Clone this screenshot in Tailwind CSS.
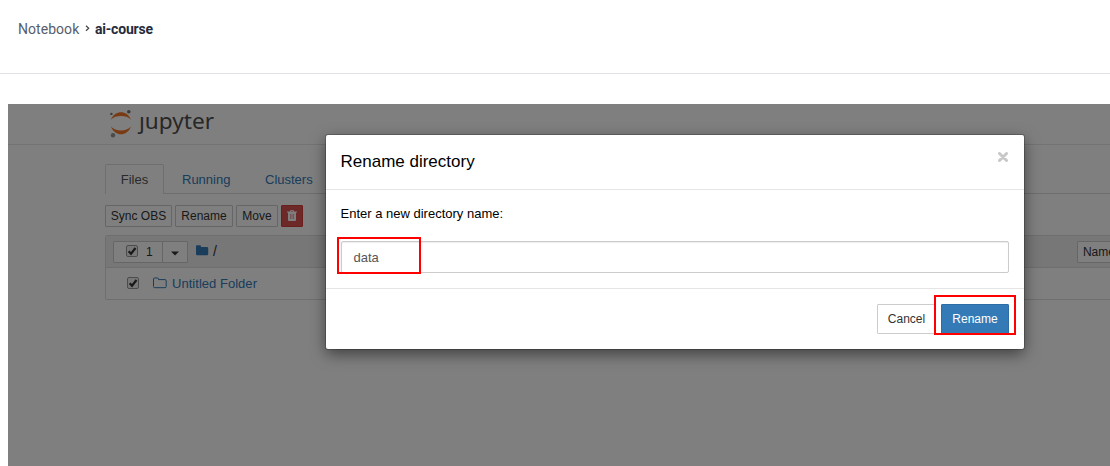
<!DOCTYPE html>
<html lang="en">
<head>
<meta charset="utf-8">
<title>ai-course</title>
<script src="https://cdn.jsdelivr.net/npm/@tailwindcss/browser@4"></script>
</head>
<body class="h-[466px] w-[1110px] overflow-hidden bg-white font-['Liberation_Sans',Arial,sans-serif] text-[13px] leading-5 text-black">
<header class="flex h-[74px] items-start border-b border-[#dfe1e6] pl-[18px] pt-[19px] font-['Roboto',sans-serif] text-[14px]">
  <span class="w-[67px] tracking-[0.05px] text-[#575d6c]">Notebook</span>
  <svg class="mt-[6px] h-[7px] w-[5px]" viewBox="0 0 5 7" fill="none" stroke="#444" stroke-width="1.2"><path d="M1 .8 3.7 3.3 1 5.8"/></svg>
  <span class="ml-[5px] font-bold tracking-[-0.2px] text-[#252b3a]">ai-course</span>
</header>
<main class="relative ml-2 mt-[30px] h-[362px] overflow-hidden bg-white">
  <div class="flex h-[41px] border-b border-[#e7e7e7] pl-[101px]">
    <svg class="mt-[5px] h-[29px] w-[23px] shrink-0" viewBox="0 0 23 29">
      <path d="M1.800 10.800C4 5.600 8 3.300 12 3.300s8 2.300 10 7.500C19.500 8 16 7 12 7S4.500 8 1.800 10.800ZM1.800 17.500c2.200 5.200 6.200 7.800 10.200 7.800s8-2.600 10-7.800c-2.500 2.800-6 4-10 4s-7.500-1.200-10.200-4Z" fill="#f37726"/>
      <circle cx="19.800" cy="2.700" r="1.800" fill="#767677"/><circle cx="2.400" cy="4.900" r="1.200" fill="#767677"/><circle cx="4" cy="26.300" r="2.200" fill="#989798"/>
    </svg>
    <div class="ml-[7px] mt-[2px] flex font-['Noto_Sans',sans-serif] text-[22.600px] leading-[30px] text-[#4e4e4e]"><span class="-ml-[3px] inline-block pl-[3px] [clip-path:inset(10px_0_0_0)]">j</span><span>upyter</span></div>
  </div>
  <div class="ml-[97px] mt-[19px] flex h-[30px] w-[1100px] border-b border-[#ddd] text-[13px] text-[#337ab7]">
    <div class="h-[30px] w-[59px] rounded-t-[2px] border border-b-0 border-[#ddd] bg-white pt-[5px] text-center text-[#555]">Files</div>
    <div class="ml-[18px] w-[49px] pt-[6px]">Running</div>
    <div class="ml-[34px] pt-[6px]">Clusters</div>
  </div>
  <div class="ml-[97px] mt-[11px] flex h-[22px] text-[12px] leading-5 text-[#333]">
    <div class="w-[67px] rounded-[1px] border border-[#ccc] text-center">Sync OBS</div>
    <div class="ml-[3px] w-[58px] rounded-[1px] border border-[#ccc] text-center">Rename</div>
    <div class="ml-[3px] w-[42px] rounded-[1px] border border-[#ccc] text-center">Move</div>
    <div class="ml-[3px] flex w-[22px] items-start justify-center rounded-[1px] border border-[#d43f3a] bg-[#d9534f] pt-[4px]">
      <svg class="h-[11px] w-[10px]" viewBox="0 0 10 11"><path fill="#fff" fill-rule="evenodd" d="M0 1.500h3L3.600 0h2.800L7 1.500h3v1H9V10a1 1 0 0 1-1 1H2a1 1 0 0 1-1-1V2.500H0ZM4 1.500h2L5.800.8H4.200ZM3 4v5h.5V4ZM4.750 4v5h.5V4ZM6.500 4v5h.5V4Z"/></svg>
    </div>
  </div>
  <div class="ml-[97px] mt-[8px] w-[1100px] rounded-[2px] border border-[#ddd]">
    <div class="flex h-[32px] border-b border-[#ddd] bg-[#eee]">
      <div class="ml-[7px] mt-[5px] flex h-[22px] w-[75px] rounded-[1px] border border-[#ccc] bg-white text-[12px] leading-5 text-[#333]">
        <div class="flex w-[49px] border-r border-[#ccc] pl-[12px]">
          <svg class="mt-[3px] h-[13px] w-[13px]" viewBox="0 0 13 13"><rect x=".5" y=".5" width="11" height="11" rx="1.500" fill="#eee" stroke="#999"/><path d="M2.700 6.200 5 8.700 9.500 3" fill="none" stroke="#333" stroke-width="2.200"/></svg>
          <span class="ml-[7px]">1</span>
        </div>
        <svg class="ml-[8px] mt-[9px] h-[5px] w-[8px]" viewBox="0 0 8 5"><path d="M0 .5h8L4 4.500Z" fill="#333"/></svg>
      </div>
      <svg class="ml-[8px] mt-[9px] h-[11px] w-[13px]" viewBox="0 0 13 11"><path d="M0 1.300Q0 .3 1 .3h3q1 0 1 1v.6h6q1.200 0 1.200 1.200v6q0 1.200-1.200 1.200H1.200Q0 10.300 0 9.100Z" fill="#337ab7"/></svg>
      <span class="ml-[4px] mt-[5px] text-[14px] text-[#333]">/</span>
      <div class="ml-[860px] mt-[5px] h-[22px] w-[80px] rounded-[1px] border border-[#ccc] bg-white pl-[5px] text-[12px] text-[#333]">Name</div>
    </div>
    <div class="flex h-[31px] pl-[20px] pt-[5px]">
      <svg class="mt-[4px] h-[13px] w-[14px]" viewBox="0 0 14 13"><rect x="1.500" y=".5" width="11" height="11" rx="1.500" fill="#eee" stroke="#999"/><path d="M3.700 6.200 6 8.700 10.500 3" fill="none" stroke="#333" stroke-width="2.200"/></svg>
      <svg class="ml-[13px] mt-[4px] h-[12px] w-[14px]" viewBox="0 0 14 12" fill="none" stroke="#337ab7"><path d="M.5 2Q.5 1 1.500 1h3q1 0 1 1v.6h6.500q1.200 0 1.200 1.200V9.500q0 1.200-1.200 1.200H1.700Q.5 10.700.5 9.500Z"/></svg>
      <span class="ml-[5px] mt-px text-[13px] tracking-[0.03px] text-[#337ab7]">Untitled Folder</span>
    </div>
  </div>

  <div class="absolute inset-0 bg-black/50 pl-[318px] pt-[31px]">
    <section class="flex h-[214px] w-[698px] flex-col rounded-[2px] bg-white shadow-[0_5px_15px_rgba(0,0,0,0.5),0_0_0_1px_rgba(0,0,0,0.2)]">
      <div class="flex h-[55px] items-start justify-between border-b border-[#e5e5e5] pl-[14.500px] pr-[16px]">
        <h4 class="mt-[16px] text-[17px] leading-[22px]">Rename directory</h4>
        <svg class="mt-[17px] h-[10px] w-[10px]" viewBox="0 0 10 10"><path d="M1.500 1.500 8.500 8.500M8.500 1.500 1.500 8.500" stroke="#c8c8c8" stroke-width="3" stroke-linecap="round"/></svg>
      </div>
      <div class="h-[98px] px-[15px] pt-[14px]">
        <p class="-ml-[0.500px] leading-5">Enter a new directory name:</p>
        <div class="relative mt-[17px] h-[32px] rounded-[2px] border border-[#ccc] pl-[11.500px] pt-[6px] text-[#555] shadow-[inset_0_1px_1px_rgba(0,0,0,0.075)]">data
          <div class="absolute left-[-5px] top-[-5px] h-[37px] w-[84px] border-2 border-[#f00]"></div>
        </div>
      </div>
      <div class="flex flex-1 justify-end border-t border-[#e5e5e5] pr-[15px] pt-[15px] text-[12px] leading-7">
        <div class="h-[30px] w-[59px] rounded-[1px] border border-[#ccc] text-center text-[#333]">Cancel</div>
        <div class="relative ml-[5px] h-[30px] w-[68px] rounded-[1px] border border-[#2e6da4] bg-[#337ab7] text-center text-white">Rename
          <div class="absolute left-[-8px] top-[-10px] h-[40px] w-[82px] border-2 border-[#f00]"></div>
        </div>
      </div>
    </section>
  </div>
</main>
</body>
</html>
